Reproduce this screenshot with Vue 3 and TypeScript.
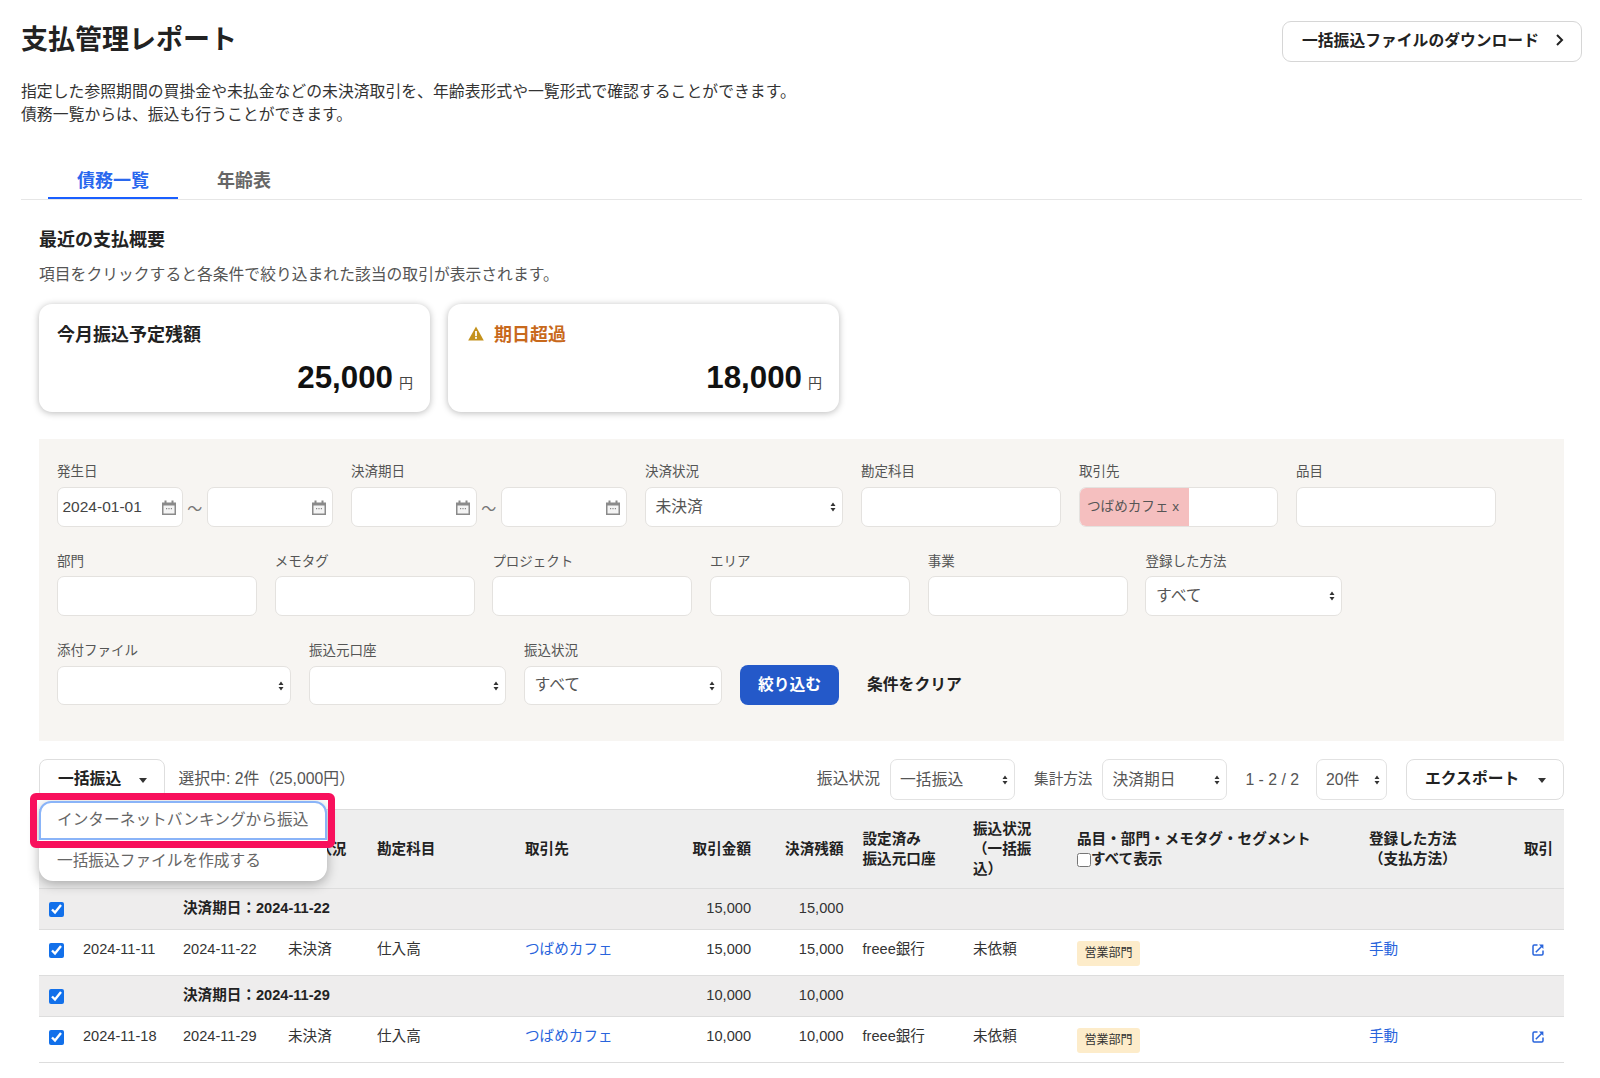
<script setup lang="ts">
interface Row {
  group: string
  amount: string
  issued: string
  due: string
}
const rows: Row[] = [
  { group: '決済期日：2024-11-22', amount: '15,000', issued: '2024-11-11', due: '2024-11-22' },
  { group: '決済期日：2024-11-29', amount: '10,000', issued: '2024-11-18', due: '2024-11-29' },
]
const colClasses = ['c1', 'c2', 'c3', 'c4', 'c5', 'c6', 'c7', 'c8', 'c9', 'c10', 'c11', 'c12', 'c13']
const row2 = ['部門', 'メモタグ', 'プロジェクト', 'エリア', '事業']
</script>

<template>
  <div class="page">
    <header class="head">
      <h1 class="title">支払管理レポート</h1>
      <button class="dl-btn" type="button">
        <span class="lift3">一括振込ファイルのダウンロード</span>
        <svg class="chev" width="10" height="14" viewBox="0 0 10 14"><path d="M2 2l5 5-5 5" fill="none" stroke="#222" stroke-width="2" /></svg>
      </button>
    </header>
    <p class="desc">指定した参照期間の買掛金や未払金などの未決済取引を、年齢表形式や一覧形式で確認することができます。<br />債務一覧からは、振込も行うことができます。</p>

    <nav class="tabs">
      <a class="tab active">債務一覧</a>
      <a class="tab">年齢表</a>
    </nav>

    <main class="content">
      <h2 class="sec-title">最近の支払概要</h2>
      <p class="sec-desc">項目をクリックすると各条件で絞り込まれた該当の取引が表示されます。</p>

      <section class="cards">
        <div class="card">
          <div class="card-label">今月振込予定残額</div>
          <div class="card-amount"><b>25,000</b><span>円</span></div>
        </div>
        <div class="card">
          <div class="card-label warn">
            <svg width="16" height="15" viewBox="0 0 16 15"><path d="M8 0.5L15.8 14.5H0.2z" fill="#c4921c" /><rect x="7.1" y="5" width="1.8" height="5.2" fill="#fff" /><rect x="7.1" y="11" width="1.8" height="1.8" fill="#fff" /></svg>
            <span>期日超過</span>
          </div>
          <div class="card-amount"><b>18,000</b><span>円</span></div>
        </div>
      </section>

      <section class="panel">
        <div class="frow">
          <div class="field">
            <label>発生日</label>
            <div class="range">
              <div class="date"><span class="lift-d">2024-01-01</span><svg class="cal" viewBox="0 0 14 15"><path d="M2.5 0.5h2v2h5v-2h2v2H14v12.5H0V2.5h2.5z" fill="#8a8a8a" /><rect x="1.5" y="5.5" width="11" height="8" fill="#f4f4f4" /><path d="M4 8h1.2v1.2H4zM6.4 8h1.2v1.2H6.4zM8.8 8H10v1.2H8.8z" fill="#8a8a8a" /></svg></div>
              <span class="tilde">～</span>
              <div class="date"><span></span><svg class="cal" viewBox="0 0 14 15"><path d="M2.5 0.5h2v2h5v-2h2v2H14v12.5H0V2.5h2.5z" fill="#8a8a8a" /><rect x="1.5" y="5.5" width="11" height="8" fill="#f4f4f4" /><path d="M4 8h1.2v1.2H4zM6.4 8h1.2v1.2H6.4zM8.8 8H10v1.2H8.8z" fill="#8a8a8a" /></svg></div>
            </div>
          </div>
          <div class="field">
            <label>決済期日</label>
            <div class="range">
              <div class="date"><span></span><svg class="cal" viewBox="0 0 14 15"><path d="M2.5 0.5h2v2h5v-2h2v2H14v12.5H0V2.5h2.5z" fill="#8a8a8a" /><rect x="1.5" y="5.5" width="11" height="8" fill="#f4f4f4" /><path d="M4 8h1.2v1.2H4zM6.4 8h1.2v1.2H6.4zM8.8 8H10v1.2H8.8z" fill="#8a8a8a" /></svg></div>
              <span class="tilde">～</span>
              <div class="date"><span></span><svg class="cal" viewBox="0 0 14 15"><path d="M2.5 0.5h2v2h5v-2h2v2H14v12.5H0V2.5h2.5z" fill="#8a8a8a" /><rect x="1.5" y="5.5" width="11" height="8" fill="#f4f4f4" /><path d="M4 8h1.2v1.2H4zM6.4 8h1.2v1.2H6.4zM8.8 8H10v1.2H8.8z" fill="#8a8a8a" /></svg></div>
            </div>
          </div>
          <div class="field">
            <label>決済状況</label>
            <div class="sel w198"><span class="lift2">未決済</span><svg class="updown" viewBox="0 0 6 10"><path d="M3 0.5L5.5 4h-5zM3 9.5L0.5 6h5z" fill="#333" /></svg></div>
          </div>
          <div class="field">
            <label>勘定科目</label>
            <div class="box w200"></div>
          </div>
          <div class="field">
            <label>取引先</label>
            <div class="box w199 tagbox"><span class="chip"><span class="lift2">つばめカフェ x</span></span></div>
          </div>
          <div class="field">
            <label>品目</label>
            <div class="box w200"></div>
          </div>
        </div>

        <div class="frow r2">
          <div v-for="f in row2" :key="f" class="field">
            <label>{{ f }}</label>
            <div class="box w200"></div>
          </div>
          <div class="field">
            <label>登録した方法</label>
            <div class="sel w197"><span class="lift1">すべて</span><svg class="updown" viewBox="0 0 6 10"><path d="M3 0.5L5.5 4h-5zM3 9.5L0.5 6h5z" fill="#333" /></svg></div>
          </div>
        </div>

        <div class="frow last">
          <div class="field">
            <label>添付ファイル</label>
            <div class="sel w234"><span></span><svg class="updown" viewBox="0 0 6 10"><path d="M3 0.5L5.5 4h-5zM3 9.5L0.5 6h5z" fill="#333" /></svg></div>
          </div>
          <div class="field">
            <label>振込元口座</label>
            <div class="sel w197"><span></span><svg class="updown" viewBox="0 0 6 10"><path d="M3 0.5L5.5 4h-5zM3 9.5L0.5 6h5z" fill="#333" /></svg></div>
          </div>
          <div class="field">
            <label>振込状況</label>
            <div class="sel w198"><span class="lift2">すべて</span><svg class="updown" viewBox="0 0 6 10"><path d="M3 0.5L5.5 4h-5zM3 9.5L0.5 6h5z" fill="#333" /></svg></div>
          </div>
          <button class="primary" type="button">絞り込む</button>
          <button class="clear" type="button">条件をクリア</button>
        </div>
      </section>

      <section class="toolbar">
        <div class="tool-left">
          <div class="bulk">
            <button class="tbtn bulk-btn" type="button">
              <span class="lift3">一括振込</span>
              <svg class="caret" viewBox="0 0 8 5"><path d="M0 0h8L4 5z" fill="#333" /></svg>
            </button>
            <div class="menu">
              <div class="menu-item focus">インターネットバンキングから振込</div>
              <div class="menu-item">一括振込ファイルを作成する</div>
              <div class="marker"></div>
            </div>
          </div>
          <span class="picked lift3">選択中: 2件（25,000円）</span>
        </div>
        <div class="tool-right">
          <span class="tlabel lift2">振込状況</span>
          <div class="sel ts w125"><span class="lift1">一括振込</span><svg class="updown" viewBox="0 0 6 10"><path d="M3 0.5L5.5 4h-5zM3 9.5L0.5 6h5z" fill="#333" /></svg></div>
          <span class="tlabel l2 lift3">集計方法</span>
          <div class="sel ts w125"><span class="lift1">決済期日</span><svg class="updown" viewBox="0 0 6 10"><path d="M3 0.5L5.5 4h-5zM3 9.5L0.5 6h5z" fill="#333" /></svg></div>
          <span class="tlabel l3">1 - 2 / 2</span>
          <div class="sel ts w71"><span class="lift1">20件</span><svg class="updown" viewBox="0 0 6 10"><path d="M3 0.5L5.5 4h-5zM3 9.5L0.5 6h5z" fill="#333" /></svg></div>
          <button class="tbtn export" type="button">
            <span class="lift3">エクスポート</span>
            <svg class="caret" viewBox="0 0 8 5"><path d="M0 0h8L4 5z" fill="#333" /></svg>
          </button>
        </div>
      </section>

      <table class="tbl">
        <colgroup>
          <col v-for="c in colClasses" :key="c" :class="c" />
        </colgroup>
        <thead>
          <tr>
            <th></th>
            <th></th>
            <th></th>
            <th>決済状況</th>
            <th>勘定科目</th>
            <th>取引先</th>
            <th class="num">取引金額</th>
            <th class="num">決済残額</th>
            <th>設定済み<br />振込元口座</th>
            <th>振込状況<br />（一括振<br />込）</th>
            <th>品目・部門・メモタグ・セグメント<br /><span class="showall"><input type="checkbox" class="plain" />すべて表示</span></th>
            <th>登録した方法<br />（支払方法）</th>
            <th class="center">取引</th>
          </tr>
        </thead>
        <tbody>
          <template v-for="r in rows" :key="r.due">
            <tr class="grp">
              <td><input type="checkbox" class="chk" checked /></td>
              <td></td>
              <td colspan="4" class="grp-name">{{ r.group }}</td>
              <td class="num">{{ r.amount }}</td>
              <td class="num">{{ r.amount }}</td>
              <td colspan="5"></td>
            </tr>
            <tr class="data">
              <td><input type="checkbox" class="chk" checked /></td>
              <td>{{ r.issued }}</td>
              <td>{{ r.due }}</td>
              <td>未決済</td>
              <td>仕入高</td>
              <td><a class="link">つばめカフェ</a></td>
              <td class="num">{{ r.amount }}</td>
              <td class="num">{{ r.amount }}</td>
              <td>freee銀行</td>
              <td>未依頼</td>
              <td><span class="tag">営業部門</span></td>
              <td><a class="link">手動</a></td>
              <td class="center">
                <svg class="ext" viewBox="0 0 12 12"><path d="M5.5 1H2.2A1.2 1.2 0 0 0 1 2.2v7.6A1.2 1.2 0 0 0 2.2 11h7.6a1.2 1.2 0 0 0 1.2-1.2V6.5" fill="none" stroke="#2864dc" stroke-width="1.5" /><path d="M3.8 8.2L9.8 2.2" fill="none" stroke="#2864dc" stroke-width="1.5" /><path d="M7 0.6h4.4V5z" fill="#2864dc" /></svg>
              </td>
            </tr>
          </template>
        </tbody>
      </table>
    </main>
  </div>
</template>

<style>
html, body { margin: 0; background: #fff; }
</style>

<style scoped>
.page {
  box-sizing: border-box;
  width: 1600px;
  padding: 21px 18px 0 21px;
  font-family: "Liberation Sans", "Noto Sans CJK JP", sans-serif;
  font-size: 15.8px;
  color: #333;
}
button { font-family: inherit; }
.lift-d { margin-bottom: 1px; font-size: 15.5px; }
.lift1 { margin-bottom: 2px; }
.lift2 { margin-bottom: 4px; }
.lift3 { margin-bottom: 5px; }
.head { display: flex; justify-content: space-between; align-items: flex-start; height: 41px; }
.title { margin: 0; font-size: 27px; line-height: 38px; font-weight: 700; color: #222; }
.dl-btn {
  box-sizing: border-box;
  display: flex; align-items: center; justify-content: space-between;
  width: 300px; height: 41px; padding: 0 16px 0 19px;
  background: #fff; border: 1px solid #d6d6d6; border-radius: 9px;
  font-size: 15.8px; font-weight: 700; color: #222;
}
.chev { margin-bottom: 4px; }
.desc { margin: 18px 0 0; line-height: 23px; color: #333; font-size: 15.85px; }
.tabs { display: flex; height: 38px; margin-top: 35px; padding-left: 27px; border-bottom: 1px solid #e6e6e6; }
.tab { box-sizing: border-box; height: 38px; padding: 0 29px; line-height: 40px; font-size: 18px; font-weight: 700; color: #666; }
.tab + .tab { margin-left: 10px; }
.tab.active { color: #2a68ee; border-bottom: 2px solid #1a5fff; }
.content { padding: 0 18px 0 18px; }
.sec-title { margin: 28px 0 0; font-size: 18px; line-height: 24px; font-weight: 700; color: #222; }
.sec-desc { margin: 11px 0 0; line-height: 24px; color: #555; }
.cards { display: flex; gap: 18px; margin-top: 17px; }
.card {
  box-sizing: border-box; width: 391px; height: 108px; padding: 17px 17px 0 18px;
  background: #fff; border-radius: 13px;
  box-shadow: 0 1px 7px rgba(0, 0, 0, 0.28);
}
.card-label { display: flex; align-items: center; gap: 10px; height: 24px; font-size: 18px; font-weight: 700; color: #222; }
.card-label.warn { color: #c8691c; margin-left: 2px; }
.card-amount { display: flex; justify-content: flex-end; align-items: baseline; gap: 6px; margin-top: 15px; line-height: 36px; }
.card-amount b { font-size: 31.3px; color: #111; }
.card-amount span { font-size: 14px; color: #444; }
.panel { margin-top: 27px; padding: 23px 18px 36px; background: #f7f5f2; }
.frow { display: flex; gap: 18px; margin-bottom: 24.5px; }
.frow.r2 { gap: 17.7px; margin-bottom: 25.5px; }
.frow.r2 label { margin-bottom: 4px; }
.frow.last { margin-bottom: 0; align-items: flex-end; }
.field label { display: block; height: 20px; margin-bottom: 5px; font-size: 13.5px; line-height: 20px; color: #555; }
.range { display: flex; align-items: center; margin-right: 0.5px; }
.tilde { width: 24.5px; text-align: center; color: #777; font-size: 15px; }
.date, .sel, .box {
  box-sizing: border-box; display: flex; align-items: center; height: 40px;
  background: #fff; border: 1px solid #e4e2df; border-radius: 7px;
}
.frow.last .sel { height: 39px; }
.date { width: 125.5px; padding: 0 6px 0 4.5px; justify-content: space-between; color: #444; }
.cal { width: 14px; height: 15px; }
.sel { padding: 0 6px 0 9.5px; justify-content: space-between; color: #555; }
.updown { width: 6px; height: 10px; flex: none; }
.w198 { width: 198px; }
.w200 { width: 200px; }
.w199 { width: 199px; }
.w197 { width: 197px; }
.w234 { width: 234px; }
.w125 { width: 125px; }
.w71 { width: 71px; }
.tagbox { align-items: stretch; padding: 0; overflow: hidden; }
.chip { display: flex; align-items: center; width: 109px; padding-left: 7px; box-sizing: border-box; background: #f5bfbf; font-size: 13.6px; color: #555; }
.primary {
  width: 99px; height: 40px; padding: 0 0 4px; border: 0; border-radius: 8px;
  background: #2459c9; color: #fff; font-size: 15.8px; font-weight: 700;
}
.clear { margin-left: 2px; height: 40px; padding: 0 8px 4px; background: none; border: 0; font-size: 15.8px; font-weight: 700; color: #222; }
.toolbar { display: flex; justify-content: space-between; height: 41px; margin-top: 18px; }
.tool-left, .tool-right { display: flex; align-items: center; }
.tbtn {
  box-sizing: border-box; display: flex; align-items: center; justify-content: space-between;
  height: 41px; background: #fff; border: 1px solid #dedede; border-radius: 8px;
  font-size: 15.8px; font-weight: 700; color: #222;
}
.caret { width: 8px; height: 5px; margin-top: 2px; }
.bulk { position: relative; }
.bulk-btn { width: 126px; padding: 0 17px 0 18px; }
.picked { margin-left: 13.5px; color: #555; }
.menu {
  position: absolute; z-index: 5; top: 42px; left: 0; width: 288px; height: 80px;
  background: #fff; border-radius: 14px;
  box-shadow: 0 3px 12px rgba(0, 0, 0, 0.3);
}
.menu-item { box-sizing: border-box; height: 40px; padding-left: 18px; line-height: 36px; font-size: 15.7px; color: #666; white-space: nowrap; }
.menu-item.focus { height: 39px; line-height: 33px; border: 2px solid #8ab4f8; border-radius: 12px 12px 0 0; padding-left: 16px; }
.menu-item + .menu-item { padding-top: 3px; }
.marker {
  position: absolute; top: -8px; left: -9px; width: 305px; height: 55px;
  box-sizing: border-box; border: 7.5px solid #f8105c; border-radius: 6px;
}
.tlabel { color: #555; white-space: nowrap; }
.tool-right .tlabel { margin-right: 10px; }
.tool-right .l2 { margin-left: 19px; margin-right: 10px; font-size: 14.6px; }
.tool-right .l3 { margin-left: 18px; margin-right: 17px; }
.ts { height: 41px; padding: 0 6px 0 9px; border-color: #e2e2e2; }
.export { width: 158px; margin-left: 19px; padding: 0 17px 0 18px; }
.tbl { width: 1525px; margin-top: 9px; table-layout: fixed; border-collapse: collapse; font-size: 14.6px; line-height: 20px; color: #333; }
.c1 { width: 34px; } .c2 { width: 100px; } .c3 { width: 105px; } .c4 { width: 89px; }
.c5 { width: 148px; } .c6 { width: 145px; } .c7 { width: 100px; } .c8 { width: 92.5px; }
.c9 { width: 110.5px; } .c10 { width: 104px; } .c11 { width: 292px; } .c12 { width: 154px; } .c13 { width: 51px; }
.tbl th {
  height: 79px; padding: 0 0 0 10px; box-sizing: border-box; text-align: left; font-weight: 700; color: #222;
  background: #eee; vertical-align: middle; border-top: 1px solid #ddd; border-bottom: 1px solid #ddd;
}
.tbl td { padding: 9px 0 0 10px; box-sizing: border-box; vertical-align: top; border-bottom: 1px solid #ddd; white-space: nowrap; }
.tbl .num { text-align: right; padding-left: 0; padding-right: 9px; }
.tbl .center { text-align: center; padding-left: 0; }
.grp td { height: 41px; background: #eeeded; }
.grp-name { font-weight: 700; color: #222; }
.data td { height: 46px; }
.chk { display: block; width: 15px; height: 15px; margin: 3.5px 0 0; accent-color: #1270ea; }
.plain { display: inline-block; width: 14px; height: 14px; margin: 0; vertical-align: -3px; }
.showall { white-space: nowrap; }
.link { color: #2864dc; }
.tag { display: inline-block; padding: 0 7.5px; height: 25px; margin: 2px 0 0; line-height: 25px; font-size: 12px; color: #333; background: #fdecca; border-radius: 3px; }
.ext { display: inline-block; width: 12px; height: 12px; margin: 5px 0 0 -2px; vertical-align: top; }
</style>
